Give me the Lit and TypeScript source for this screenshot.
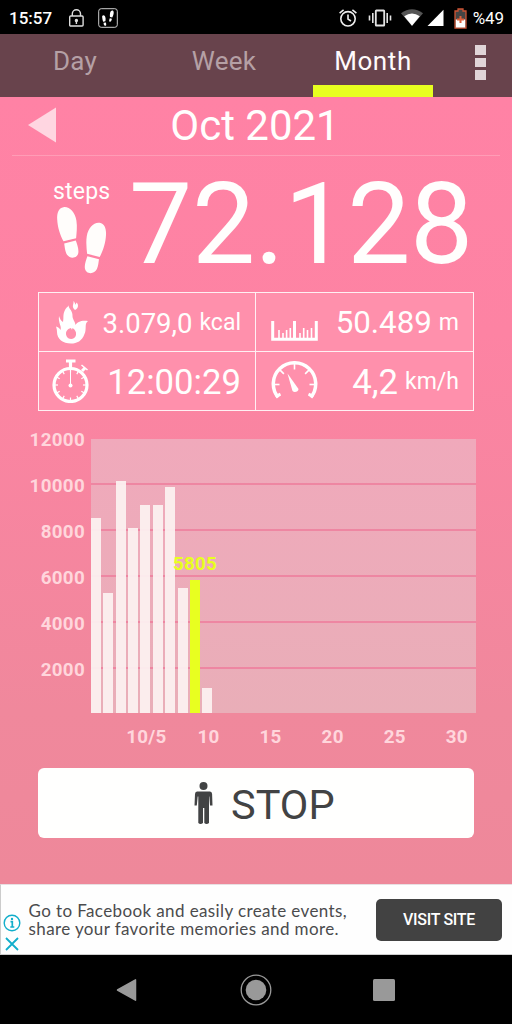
import { LitElement, html, css, svg } from "lit";
import { customElement, state } from "lit/decorators.js";
import { classMap } from "lit/directives/class-map.js";

const DAYS = [8480, 5235, 10080, 8080, 9060, 9070, 9830, 5440, 5805, 1140];
const SCALE = [12000, 10000, 8000, 6000, 4000, 2000];
const TICKS: [number, string][] = [[5, "10/5"], [10, "10"], [15, "15"], [20, "20"], [25, "25"], [30, "30"]];
const PX_PER_STEP = 46.1 / 2000;

// One foot: sole and heel separated by a narrow gap.
const leftFoot = svg`
  <path d="M1.2 22.5C.8 16 2.6 11 7.500 10.200C13.500 9.400 19 15 20.400 23.500C21.400 30 20.600 36 20.100 41.200L7.500 44.300C4.200 38.500 1.500 30 1.200 22.500Z"/>
  <path d="M8.200 46.600L19.800 43.600C21.600 48.500 24.300 56 20.500 59.200C17.200 62 12.300 60.500 10.300 56.500C9 53.500 8.600 49.500 8.200 46.600Z"/>`;

@customElement("step-chart")
export class StepChart extends LitElement {
  static styles = css`
    :host { display: grid; grid-template-columns: 85px 385px; column-gap: 5.5px; color: #ffd6dc;
      font: 700 18.8px/24px Roboto, sans-serif; letter-spacing: .3px; }
    .scale { display: flex; flex-direction: column; height: 298px; }
    .scale span { height: 46.1px; flex: none; line-height: 46.1px; text-align: right; }
    .plot { margin-top: 21.5px; height: 274.5px; display: grid; grid-template-columns: repeat(31, 1fr);
      align-items: end;
      background: linear-gradient(#f0a9bb, #e9aeb8); position: relative; }
    .lines { position: absolute; inset: 0; display: flex; flex-direction: column; }
    .lines i { height: 46.1px; flex: none; box-sizing: border-box; border-bottom: 2px solid #ee86a2; }
    .bar { width: 10px; margin-left: .2px; background: rgba(252, 242, 241, .93); position: relative; }
    .today { background: #e8ff20; }
    .value { position: absolute; left: 50%; bottom: calc(100% + 4px); transform: translateX(-50%); color: #e8ff20; }
    .ticks { grid-column: 2; display: grid; grid-template-columns: repeat(31, 1fr); margin-top: 10px; }
    .tick { display: flex; justify-content: center; white-space: nowrap; width: 12.4px; }
  `;
  render() {
    return html`
      <div class="scale">${SCALE.map((s) => html`<span>${s}</span>`)}</div>
      <div class="plot">
        <div class="lines">${SCALE.slice(1).map(() => html`<i></i>`)}</div>
        ${DAYS.map((d, i) => html`
          <div class=${classMap({ bar: true, today: i === 8 })} style="height:${d * PX_PER_STEP - 0.8}px">
            ${i === 8 ? html`<span class="value">${d}</span>` : ""}
          </div>`)}
      </div>
      <div class="ticks">
        ${TICKS.map(([day, label]) => html`<span class="tick" style="grid-area:1/${day}">${label}</span>`)}
      </div>`;
  }
}

@customElement("app-root")
export class AppRoot extends LitElement {
  @state() tab = "Month";

  static styles = css`
    :host { display: flex; flex-direction: column; width: 512px; height: 1024px; overflow: hidden;
      font-family: Roboto, sans-serif; color: #fffefd; background: #000; }
    * { box-sizing: border-box; }
    svg { display: block; flex: none; }
    .status { height: 34px; display: flex; align-items: center; padding: 2px 8px 0 9px; }
    .clock { font: 500 17px/32px Roboto, sans-serif; width: 59px; }
    .lock { margin-right: 13px; }
    .spring { flex: 1; }
    .percent { font-size: 17px; line-height: 32px; margin-left: 6px; letter-spacing: -.1px; }
    .tabs { height: 63px; background: #68434c; display: flex; gap: 29px; padding-left: 15px; }
    .tab { width: 120px; height: 63px; font-size: 26px; line-height: 54px; text-align: center; color: #b5a0a5; letter-spacing: .3px; }
    .active { color: #fffafc; border-bottom: 12px solid #e8ff20; letter-spacing: .6px; }
    .more { margin: 11px 0 0 13px; display: flex; flex-direction: column; gap: 3px; }
    .more i { width: 11px; height: 9.6px; background: #e0d5d8; }
    .body { height: 787px; background: linear-gradient(#ff82a5 0, #fd83a3 30%, #f0889c 78%, #ee889a); }
    .period { height: 59px; display: flex; align-items: center; margin: 0 12px; padding: 0 0 3px 16px; border-bottom: 1px solid #ff9cb6; }
    .title { flex: 1; text-align: center; font-size: 42px; line-height: 56px; margin: 2px 46px 0 0; }
    .total { height: 136px; display: flex; padding: 0 36px 0 53px; }
    .steps { width: 76px; padding-top: 21px; font-size: 23px; line-height: 30px; letter-spacing: .2px; }
    .feet { margin: -1px 0 0 3px; }
    .count { font-size: 112.5px; line-height: 136px; letter-spacing: -.3px; white-space: nowrap; margin-top: 1px; }
    .stats { margin: 0 38px; height: 119px; display: grid; grid-template-columns: 217px 217px; grid-template-rows: 58px 59px;
      width: 436px; border: 1.5px solid #fff0f3; background: #ff90ac; }
    .stat { display: flex; align-items: center; padding-right: 14px; white-space: nowrap; }
    .stat:nth-child(odd) { border-right: 1.5px solid #fff0f3; }
    .stat:nth-child(n + 3) { border-top: 1.5px solid #fff0f3; }
    .num { margin-left: auto; }
    .unit { font-size: 23px; margin-left: 7px; }
    .kcal { font-size: 27.5px; margin-top: 2px; }
    .dist { font-size: 31.3px; }
    .time { font-size: 34.7px; margin-top: 2px; }
    .ico { margin-left: 12px; }
    step-chart { margin-top: 6px; }
    .stop { margin: 19px 38px 0; width: 436px; height: 70px; border-radius: 6px; background: #fffffe; color: #424344;
      display: flex; align-items: center; padding-left: 156px; font-size: 41.5px; line-height: 72px; }
    .stop span { margin: 3px 0 0 18px; }
    .ad { height: 71px; background: #fefefe; color: #4b4b4d; display: flex; align-items: center; padding-right: 10px;
      border-top: 1px solid #e8dfe2; border-bottom: 1px solid #ccc; border-left: 1px solid #ccc; }
    .choices { width: 27.5px; padding: 25px 0 0 2px; }
    .choices svg + svg { margin-top: 5px; }
    .copy { font: 17px/18px Lato, sans-serif; flex: 1; white-space: nowrap; letter-spacing: .39px; }
    .visit { width: 126px; height: 42px; border-radius: 5px; background: #424242; color: #fff; text-align: center;
      font: 500 16px/42px Roboto, sans-serif; letter-spacing: -.3px; white-space: nowrap; }
    .nav { height: 69px; display: flex; align-items: center; padding-left: 116px; }
    .nav svg + svg { margin-left: 103px; }
    .nav svg:last-child { margin-left: 101px; }
  `;

  render() {
    const ticks = (n: number, from: number, step: number, r1: number, r2: number, cx: number, cy: number) =>
      Array.from({ length: n }, (_, i) => {
        const a = ((from + i * step) * Math.PI) / 180;
        return svg`<line x1=${cx + r1 * Math.cos(a)} y1=${cy + r1 * Math.sin(a)} x2=${cx + r2 * Math.cos(a)} y2=${cy + r2 * Math.sin(a)}/>`;
      });
    return html`
      <div class="status">
        <span class="clock">15:57</span>
        <svg class="lock" width="17" height="20" viewBox="0 0 17 20" fill="none" stroke="#ddd" stroke-width="1.4">
          <rect x="1.7" y="8" width="13.4" height="10" rx="1"/><path d="M4.3 8V5.8a4.1 4.1 0 0 1 8.2 0V8M8.4 13v3"/><circle cx="8.4" cy="12.5" r="1" fill="#fff"/>
        </svg>
        <svg width="20" height="20" viewBox="0 0 20 20">
          <rect x=".7" y=".7" width="18.6" height="18.6" rx="2.5" fill="none" stroke="#ccc"/>
          <g fill="#fff"><path d="M4.2 9.5C3.7 7 6 6.4 7 8.3c.9 2 .6 3.3.4 5l-2.3.4c-.5-1.5-.8-2.7-.9-4.2ZM5.6 14.7l2.3-.3c.8 2.7.2 3.4-.7 3.4-1.1 0-1.6-1.500-1.600-3.100ZM12.200 4.500c.5-2.600 3.600-2.900 3.500 0 0 2-.8 3.500-1.500 5.100l-2.200-.5c-.3-1.700-.1-3 .2-4.600ZM11.800 10.200l2.100.6c-.4 2.300-1.200 3.300-2.200 2.900-1-.4-.4-2 .1-3.500Z"/></g>
        </svg>
        <span class="spring"></span>
        <svg width="20" height="20" viewBox="0 0 20 20" fill="none" stroke="#eee" stroke-width="1.600">
          <circle cx="10" cy="10.800" r="7.200"/><path d="M10 6.600v4.500l3 1.900M1.600 5.100l4-3.300M18.400 5.100l-4-3.300"/>
        </svg>
        <svg style="margin-left:10px" width="24" height="20" viewBox="0 0 24 20" stroke="#e4e4e4" stroke-width="1.600" fill="none">
          <rect x="7.800" y="2.500" width="8.400" height="15" rx=".6" stroke-width="1.800"/><path d="M4.800 5v10M1.500 7.500v5M19.200 5v10M22.500 7.500v5"/>
        </svg>
        <svg style="margin-left:9px" width="22" height="20" viewBox="0 0 22 20">
          <path d="M0 5.300Q11-3 22 5.300L11 18Z" fill="#555"/><path d="M3.200 8.200Q11 3 18.800 8.200L11 17.800Z" fill="#fff"/>
        </svg>
        <svg style="margin-left:4px" width="17" height="20" viewBox="0 0 17 20"><path d="M.5 18L16.500 1.800V18Z" fill="#fff"/></svg>
        <svg style="margin-left:10px" width="13" height="21" viewBox="0 0 13 21">
          <path d="M1 3h3V1h5v2h3v17H1Z" fill="#454545" stroke="#cf5434" stroke-width="1.300"/><path d="M1.800 11.500h9.400v8H1.800Z" fill="#fff"/><path d="M6.500 8v7M3 11.500h7" stroke="#e0613d" stroke-width="2"/>
        </svg>
        <span class="percent">%49</span>
      </div>
      <div class="tabs">
        ${["Day", "Week", "Month"].map((t) => html`
          <div class=${classMap({ tab: true, active: t === this.tab })} @click=${() => (this.tab = t)}>${t}</div>`)}
        <div class="more"><i></i><i></i><i></i></div>
      </div>
      <div class="body">
        <div class="period">
          <svg width="28" height="36" viewBox="0 0 28 36"><path d="M0 18L28 .5V35.500Z" fill="#ffd6e1"/></svg>
          <span class="title">Oct 2021</span>
        </div>
        <div class="total">
          <div class="steps">steps
            <svg class="feet" width="52" height="68" viewBox="0 9 52 68" fill="#fffdfb">
              ${leftFoot}
              <g transform="translate(51.2 15.600) scale(-1 1)">${leftFoot}</g>
            </svg>
          </div>
          <div class="count">72.128</div>
        </div>
        <div class="stats">
          <div class="stat">
            <svg class="ico" style="margin-left:16px" width="34" height="46" viewBox="0 0 34 46" fill="#fff">
              <path fill-rule="evenodd" d="M14 5C12 9 18 11 17.500 17C17.300 20 20 22 20.500 26C22.500 23 26 21 33 22C29 25 32 30 29.500 35C27 42 22 44.500 16 44.500C8 44.500 2 40 2 33C2 31 1.500 29 1 27.500C3 28 4.500 29 5.500 31C7 27 3 24 4 17C5 20 6 22 8 23C9 18 7.500 16 10 11C11.500 8 13.500 8 14 5ZM16 29C12 30 10 33 11.500 37C13 41 20 41 21 36C21.500 33 20 30.500 17.500 29C17 31 17 31 16 29Z"/>
              <path d="M18.500 2C19 6 16 7 20 11C24 9 23.500 5 21.500 3.500C21 5 20.500 5 20.500 6C20 4 19.500 3 18.500 2Z"/>
            </svg>
            <span class="num kcal">3.079,0</span><span class="unit">kcal</span>
          </div>
          <div class="stat">
            <svg class="ico" style="margin:18px 0 0 15px" width="47" height="20" viewBox="0 0 47 20" fill="none" stroke="#fff">
              <path d="M1.700 0V18.200H45.300V0M23.500 0V18" stroke-width="3"/>
              <path d="M8 9v9M12 12v6M15.600 9v9M19.300 7v11M29 12v6M32.700 7v11M36.500 9v9M40.500 7v11" stroke-width="1.600"/>
            </svg>
            <span class="num dist">50.489</span><span class="unit">m</span>
          </div>
          <div class="stat">
            <svg class="ico" width="40" height="44" viewBox="0 0 40 44" fill="none" stroke="#fff">
              <circle cx="19.500" cy="26" r="16.500" stroke-width="3.200"/>
              <path d="M15 2h9.500M19.500 2v7" stroke-width="3.200"/><path d="M31 12l3-3" stroke-width="3"/><path d="M30.500 6l6 5" stroke-width="1.500"/>
              <path d="M19.500 12.500V26" stroke-width="1"/><circle cx="19.500" cy="26.500" r="2" fill="#fff" stroke="none"/>
              <g stroke-width="1.200">${ticks(12, 0, 30, 12.5, 16, 19.5, 26)}</g>
            </svg>
            <span class="num time">12:00:29</span>
          </div>
          <div class="stat">
            <svg class="ico" style="margin-left:15px" width="47" height="40" viewBox="0 0 47 40" fill="none" stroke="#fff">
              <path d="M7.200 36.500A21.200 21.200 0 1 1 39.800 36.500" stroke-width="3.500"/>
              <path d="M4.500 35.500l5-2.300M42.500 35.500l-5-2.300" stroke-width="3"/>
              <g stroke-width="1.600">${ticks(5, 180, 45, 15, 21, 23.5, 23.5)}</g>
              <path d="M16.500 12.500L27.500 28C27.500 31 23 32 21.500 30Z" fill="#fff" stroke="none"/>
            </svg>
            <span class="num time">4,2</span><span class="unit">km/h</span>
          </div>
        </div>
        <step-chart></step-chart>
        <div class="stop">
          <svg width="19" height="44" viewBox="0 0 19 44" fill="#424344">
            <circle cx="9.500" cy="5" r="4"/>
            <path d="M3 10.500H16Q18 10.500 18.100 13L18.500 24.500H16L15.300 15.500H15V42Q12.500 44 10.300 42V27H9V42Q6.500 44 4.300 42V15.500H3.700L2.800 24.500H.5L1 13Q1.100 10.500 3 10.500Z"/>
          </svg>
          <span>STOP</span>
        </div>
      </div>
      <div class="ad">
        <div class="choices">
          <svg width="18" height="18" viewBox="0 0 18 18" fill="none" stroke="#11aecb" stroke-width="1.400"><circle cx="9" cy="9" r="7.800"/><path d="M7.500 7.700H9.300V13M7.300 13h4" stroke-width="1.700"/><circle cx="9" cy="4.900" r="1.200" fill="#11aecb" stroke="none"/></svg>
          <svg width="18" height="14" viewBox="0 0 18 14" stroke="#11aecb" stroke-width="1.800"><path d="M3 1L15 13M15 1L3 13"/></svg>
        </div>
        <div class="copy"><div>Go to Facebook and easily create events,</div><div>share your favorite memories and more.</div></div>
        <div class="visit">VISIT SITE</div>
      </div>
      <div class="nav">
        <svg width="21" height="24" viewBox="0 0 21 24"><path d="M1.500 12L19.500 1.800V22.200Z" fill="#999" stroke="#999" stroke-width="1.500" stroke-linejoin="round"/></svg>
        <svg width="32" height="32" viewBox="0 0 32 32"><circle cx="16" cy="16" r="14.800" fill="none" stroke="#999" stroke-width="1.300"/><circle cx="16" cy="16" r="10.300" fill="#999"/></svg>
        <svg width="22" height="22" viewBox="0 0 22 22"><rect width="22" height="22" rx="1.500" fill="#999"/></svg>
      </div>`;
  }
}
